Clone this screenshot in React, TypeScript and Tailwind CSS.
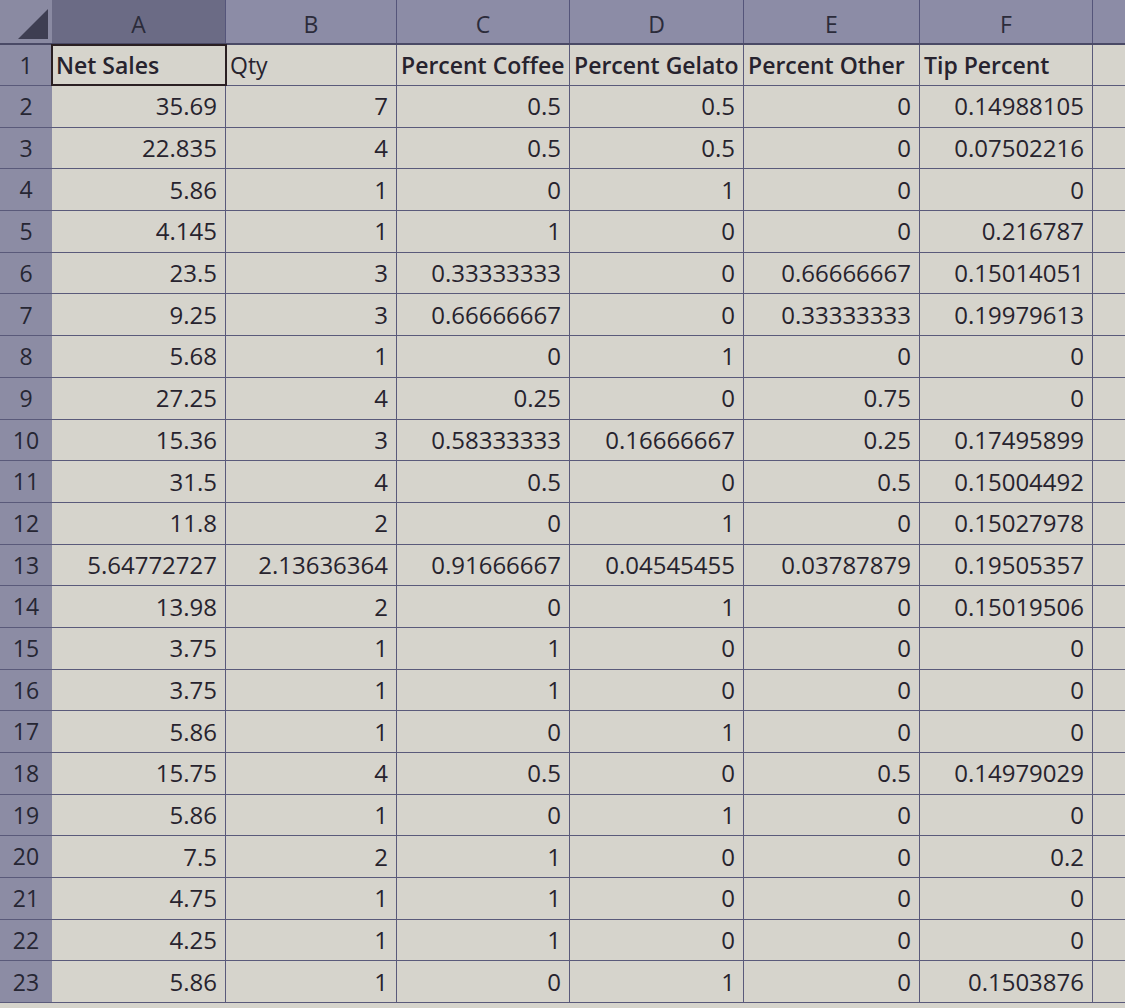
import React from "react";

const rows: string[][] = [
  ["35.69","7","0.5","0.5","0","0.14988105"],
  ["22.835","4","0.5","0.5","0","0.07502216"],
  ["5.86","1","0","1","0","0"],
  ["4.145","1","1","0","0","0.216787"],
  ["23.5","3","0.33333333","0","0.66666667","0.15014051"],
  ["9.25","3","0.66666667","0","0.33333333","0.19979613"],
  ["5.68","1","0","1","0","0"],
  ["27.25","4","0.25","0","0.75","0"],
  ["15.36","3","0.58333333","0.16666667","0.25","0.17495899"],
  ["31.5","4","0.5","0","0.5","0.15004492"],
  ["11.8","2","0","1","0","0.15027978"],
  ["5.64772727","2.13636364","0.91666667","0.04545455","0.03787879","0.19505357"],
  ["13.98","2","0","1","0","0.15019506"],
  ["3.75","1","1","0","0","0"],
  ["3.75","1","1","0","0","0"],
  ["5.86","1","0","1","0","0"],
  ["15.75","4","0.5","0","0.5","0.14979029"],
  ["5.86","1","0","1","0","0"],
  ["7.5","2","1","0","0","0.2"],
  ["4.75","1","1","0","0","0"],
  ["4.25","1","1","0","0","0"],
  ["5.86","1","0","1","0","0.1503876"],
];
const headers = ["Net Sales","Qty","Percent Coffee","Percent Gelato","Percent Other","Tip Percent"];
const cols = "grid-cols-[52px_174px_171px_173px_174px_176px_173px_32px]";

export default function App() {
  return (
    <div className="w-[1125px] h-[1008px] overflow-hidden bg-[#d6d4cc] text-[#27232e] text-[23px]" style={{ fontFamily: '"Open Sans", "Noto Sans", sans-serif' }}>
      <div className={`grid ${cols} h-[45px] bg-[#8c8ca6] border-b-2 border-[#4a4a66]`}>
        <div className="flex items-end justify-end pr-1 pb-1 bg-[#8a8aa2]">
          <div className="w-0 h-0 border-l-[30px] border-l-transparent border-b-[30px] border-b-[#3e3e52]" />
        </div>
        {["A","B","C","D","E","F"].map((c, i) => (
          <div key={c} className={`flex items-end justify-center pb-0.5 border-r border-[#55557a] text-[#2b2b3a] ${i === 0 ? "bg-[#6b6b85]" : ""}`}>{c}</div>
        ))}
        <div />
      </div>
      <div className={`grid ${cols} h-[41px] border-b border-[#5a5a7a]`}>
        <div className="flex items-center justify-center bg-[#8c8ca4] text-[#262633]">1</div>
        {headers.map((h, i) => (
          <div key={i} className={`flex items-center overflow-hidden whitespace-nowrap pl-1 border-r border-[#5a5a7a] ${i === 0 ? "outline-2 outline-[#2a1f22] -outline-offset-1 font-semibold" : i === 1 ? "" : "font-semibold"}`}>{h}</div>
        ))}
        <div />
      </div>
      {rows.map((r, ri) => (
        <div key={ri} className={`grid ${cols} h-[41.7px] border-b border-[#5a5a7a]`}>
          <div className="flex items-center justify-center bg-[#8c8ca4] text-[#262633]">{ri + 2}</div>
          {r.map((v, ci) => (
            <div key={ci} className="flex items-center justify-end pr-2 border-r border-[#5a5a7a] whitespace-nowrap text-[24px]">{v}</div>
          ))}
          <div />
        </div>
      ))}
    </div>
  );
}
